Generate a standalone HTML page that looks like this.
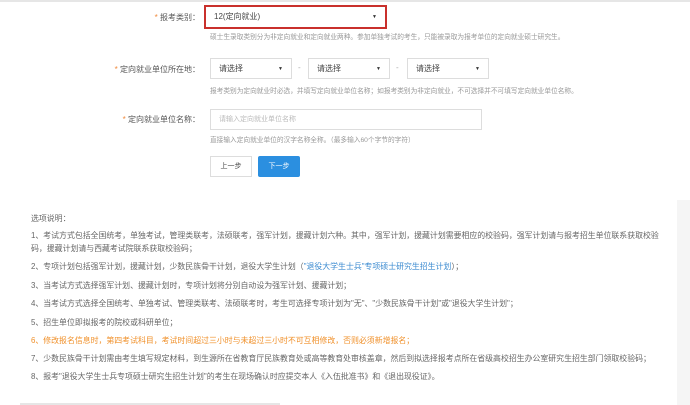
<!DOCTYPE html>
<html><head><meta charset="utf-8"><style>
body{margin:0;width:690px;height:405px;background:#fff;position:relative;overflow:hidden;font-family:"Liberation Sans","Noto Sans CJK SC",sans-serif;color:#555;}
.a{position:absolute;white-space:nowrap}
.lbl{font-size:8px;color:#555;text-align:right}
.lbl b{color:#f08a3c;font-weight:normal}
.sel{position:absolute;border:1px solid #ddd;background:#fff;font-size:8px;color:#444;box-sizing:border-box;padding-left:8px;line-height:20px;height:21px}
.sel:after{content:"▼";position:absolute;right:8px;font-size:5px;color:#333}
.inp:after{content:none}
.hint{font-size:6.7px;color:#999}
.n{font-size:7.9px;color:#666;left:31px}
</style></head><body>
<div class="a" style="left:0;top:0;width:690px;height:2px;background:#e6e6e6"></div>
<div class="a lbl" style="right:490px;top:12px"><b>* </b>报考类别：</div>
<div class="sel" style="left:204px;top:5px;width:183px;height:24px;border:2px solid #c9302c;line-height:20px">12(定向就业)</div>
<div class="a hint" style="left:210px;top:31px">硕士生录取类别分为非定向就业和定向就业两种。参加单独考试的考生，只能被录取为报考单位的定向就业硕士研究生。</div>
<div class="a lbl" style="right:490px;top:64px"><b>* </b>定向就业单位所在地：</div>
<div class="sel" style="left:210px;top:58px;width:82px">请选择</div>
<div class="a" style="left:298px;top:63px;font-size:8px;color:#aaa">-</div>
<div class="sel" style="left:308px;top:58px;width:82px">请选择</div>
<div class="a" style="left:396px;top:63px;font-size:8px;color:#aaa">-</div>
<div class="sel" style="left:407px;top:58px;width:82px">请选择</div>
<div class="a hint" style="left:210px;top:85px">报考类别为定向就业时必选，并填写定向就业单位名称；如报考类别为非定向就业，不可选择并不可填写定向就业单位名称。</div>
<div class="a lbl" style="right:490px;top:114px"><b>* </b>定向就业单位名称：</div>
<div class="sel inp" style="left:210px;top:109px;width:272px;color:#bbb;font-size:7px">请输入定向就业单位名称</div>
<div class="a hint" style="left:210px;top:134px">直接输入定向就业单位的汉字名称全称。（最多输入60个字节的字符）</div>
<div class="a" style="left:210px;top:156px;width:42px;height:21px;border:1px solid #ddd;box-sizing:border-box;font-size:7px;text-align:center;line-height:19px;color:#444">上一步</div>
<div class="a" style="left:258px;top:156px;width:42px;height:21px;background:#2b8fe0;border-radius:2px;font-size:7px;text-align:center;line-height:21px;color:#fff">下一步</div>
<div class="a" style="left:677px;top:200px;width:13px;height:205px;background:#f5f5f5"></div>
<div class="a n" style="top:213px">选项说明：</div>
<div class="a n" style="top:230px">1、考试方式包括全国统考，单独考试，管理类联考，法硕联考，强军计划，援藏计划六种。其中，强军计划，援藏计划需要相应的校验码，强军计划请与报考招生单位联系获取校验</div>
<div class="a n" style="top:243px">码，援藏计划请与西藏考试院联系获取校验码；</div>
<div class="a n" style="top:261px">2、专项计划包括强军计划，援藏计划，少数民族骨干计划，退役大学生计划（<span style="color:#3a8ad0">"退役大学生士兵"专项硕士研究生招生计划</span>）；</div>
<div class="a n" style="top:280px">3、当考试方式选择强军计划、援藏计划时，专项计划将分别自动设为强军计划、援藏计划；</div>
<div class="a n" style="top:298px">4、当考试方式选择全国统考、单独考试、管理类联考、法硕联考时，考生可选择专项计划为"无"、"少数民族骨干计划"或"退役大学生计划"；</div>
<div class="a n" style="top:317px">5、招生单位即拟报考的院校或科研单位；</div>
<div class="a n" style="top:335px;color:#f0902a">6、修改报名信息时，第四考试科目，考试时间超过三小时与未超过三小时不可互相修改，否则必须新增报名；</div>
<div class="a n" style="top:353px">7、少数民族骨干计划需由考生填写规定材料，到生源所在省教育厅民族教育处或高等教育处审核盖章，然后到拟选择报考点所在省级高校招生办公室研究生招生部门领取校验码；</div>
<div class="a n" style="top:371px">8、报考"退役大学生士兵专项硕士研究生招生计划"的考生在现场确认时应提交本人《入伍批准书》和《退出现役证》。</div>
<div class="a" style="left:20px;top:403px;width:260px;height:2px;background:#e6e6e6"></div>
</body></html>
